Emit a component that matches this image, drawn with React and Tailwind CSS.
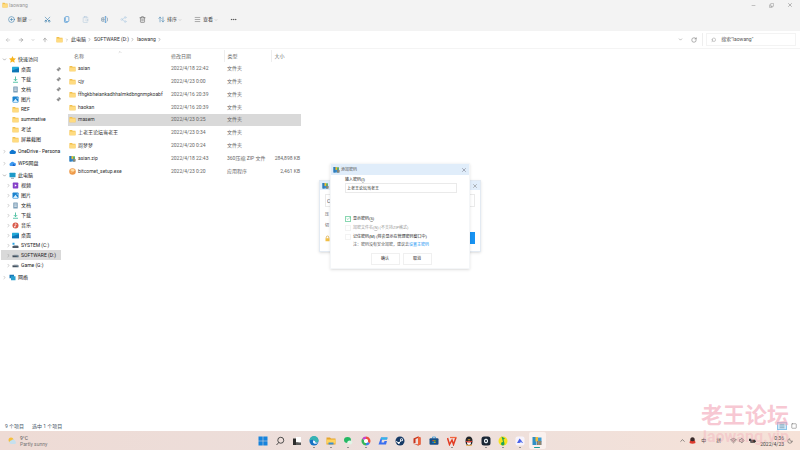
import { useState } from 'react';
import clsx from 'clsx';
import {
  ArrowLeft,
  ArrowRight,
  ArrowUp,
  ArrowUpDown,
  Check,
  ChevronDown,
  ChevronRight,
  ChevronUp,
  CirclePlus,
  ClipboardPaste,
  Copy,
  Ellipsis,
  Menu,
  Minus,
  Moon,
  Pin,
  RotateCw,
  Scissors,
  Search,
  Share2,
  Square,
  Trash2,
  Volume1,
  Wifi,
  X,
} from 'lucide-react';

function FolderIcon({ className = 'w-[7px] h-[7px]' }) {
  return (
    <svg viewBox="0 0 14 14" className={clsx('shrink-0', className)}>
      <path d="M1 2h5l1.500 1.600H13v9H1z" fill="#f2c04c" />
      <path d="M1 5h12v7.600H1z" fill="#ffdb80" />
    </svg>
  );
}

function ZipIcon({ className = 'w-[7px] h-[7px]' }) {
  return (
    <svg viewBox="0 0 14 14" className={clsx('shrink-0', className)}>
      <path d="M1 2h5l1 1h5v10H1z" fill="#3b8fd0" />
      <path d="M1 2h4v11H1z" fill="#2f7ab8" />
      <path d="M5 2h3v6H5z" fill="#f0c030" />
      <path d="M8 3h4v4H8z" fill="#6cb655" />
      <path d="M8 8h5v5H8z" fill="#56616b" />
      <path d="M9.500 8v5M11.500 8v5" stroke="#f4d48a" strokeWidth=".8" />
    </svg>
  );
}

function PagesIcon({ className }) {
  return (
    <svg viewBox="0 0 24 24" className={className} fill="none" stroke="currentColor" strokeWidth="2">
      <rect x="8" y="2" width="12" height="17" rx="2.500" />
      <path d="M5 5v14.500A2.500 2.500 0 007.500 22H16" />
    </svg>
  );
}

function RenameIcon({ className }) {
  return (
    <svg viewBox="0 0 24 24" className={className} fill="none" stroke="currentColor" strokeWidth="2">
      <path d="M12 6H4a2 2 0 00-2 2v8a2 2 0 002 2h8M19 6h1a2 2 0 012 2v8a2 2 0 01-2 2h-1" />
      <path d="M13 2h5M13 22h5M15.500 2v20" stroke="#2b84cf" />
      <path d="M6 10h5v4H6z" />
    </svg>
  );
}

const placeIcons = {
  star: <path d="M7 0l2.100 4.600 4.900.6-3.600 3.300 1 4.900L7 11l-4.400 2.400 1-4.900L0 5.200l4.900-.6z" fill="#f8b51c" />,
  desktop: (
    <>
      <rect x="0" y="1.500" width="14" height="11" rx="1" fill="#23a9d8" />
      <path d="M0 9l14-5v7.500a1 1 0 01-1 1H1a1 1 0 01-1-1z" fill="#0f75b5" />
    </>
  ),
  download: (
    <path d="M7 1v8M3.500 6L7 9.500 10.500 6M2 12.500h10" fill="none" stroke="#24b18c" strokeWidth="1.500" />
  ),
  document: (
    <>
      <rect x="2.500" y="1" width="9" height="12" rx="1" fill="#7e9fb8" />
      <path d="M4.500 4h5M4.500 6.500h5M4.500 9h5" stroke="#fff" strokeWidth="1.200" />
    </>
  ),
  picture: (
    <>
      <rect x="1" y="1" width="12" height="12" rx="1.500" fill="#1b83cf" />
      <path d="M2 12l5-6.500L12 12z" fill="#d9f0ff" />
      <circle cx="10.500" cy="4" r="1.200" fill="#fff" />
    </>
  ),
  video: (
    <>
      <rect x="1.500" y="1" width="11" height="12" rx="1.500" fill="#8640c8" />
      <path d="M5.500 4.500v5l4-2.500z" fill="#fff" />
    </>
  ),
  music: (
    <>
      <circle cx="7" cy="7" r="6" fill="#d95a4a" />
      <path d="M6.500 9.500V3.500l3 1.500" stroke="#fff" strokeWidth="1.200" fill="none" />
      <circle cx="5.500" cy="9.500" r="1.400" fill="#fff" />
    </>
  ),
  cloud: (
    <path d="M3.500 12A3 3 0 013 6.200 4 4 0 0110.300 5.500 3.200 3.200 0 0111 12z" fill="#1177cf" />
  ),
  wps: (
    <>
      <path d="M3.500 12A3 3 0 013 6.200 4 4 0 0110.300 5.500 3.200 3.200 0 0111 12z" fill="#3f9bf0" />
      <path d="M7 12l2-5 4 5z" fill="#1c62c9" />
    </>
  ),
  computer: (
    <>
      <rect x="1" y="1.500" width="12" height="9" rx="1" fill="#1d9ac9" />
      <path d="M4 12.500h6" stroke="#50708a" strokeWidth="1.300" />
    </>
  ),
  system: (
    <>
      <path d="M1 1.500h4v4H1z" fill="#28a3e4" />
      <path d="M1 8h12v4H1z" fill="#4e5a66" />
      <path d="M2 8l2-2h7l2 2z" fill="#a9b4bd" />
    </>
  ),
  drive: (
    <>
      <path d="M1 6.500h12v4H1z" fill="#46525e" />
      <path d="M2 6.500l2-1.500h7l2 1.500z" fill="#b4bdc5" />
      <path d="M9.500 8.500h2" stroke="#6fd0ff" />
    </>
  ),
  network: (
    <>
      <rect x="1" y="1.500" width="9" height="7" fill="#1879b8" />
      <rect x="4" y="4.500" width="9" height="8" fill="#2ba0cf" />
    </>
  ),
};

function PlaceIcon({ name }) {
  if (name === 'folder') return <FolderIcon />;
  return (
    <svg viewBox="0 0 14 14" className="w-[7px] h-[7px] shrink-0">
      {placeIcons[name]}
    </svg>
  );
}

const sections = [
  {
    label: '快速访问',
    icon: 'star',
    open: true,
    items: [
      { label: '桌面', icon: 'desktop', pinned: true },
      { label: '下载', icon: 'download', pinned: true },
      { label: '文档', icon: 'document', pinned: true },
      { label: '图片', icon: 'picture', pinned: true },
      { label: 'REF', icon: 'folder' },
      { label: 'summative', icon: 'folder' },
      { label: '考试', icon: 'folder' },
      { label: '屏幕截图', icon: 'folder' },
    ],
  },
  { label: 'OneDrive - Persona', icon: 'cloud', items: [] },
  { label: 'WPS网盘', icon: 'wps', items: [] },
  {
    label: '此电脑',
    icon: 'computer',
    open: true,
    items: [
      { label: '视频', icon: 'video', expandable: true },
      { label: '图片', icon: 'picture', expandable: true },
      { label: '文档', icon: 'document', expandable: true },
      { label: '下载', icon: 'download', expandable: true },
      { label: '音乐', icon: 'music', expandable: true },
      { label: '桌面', icon: 'desktop', expandable: true },
      { label: 'SYSTEM (C:)', icon: 'system', expandable: true },
      { label: 'SOFTWARE (D:)', icon: 'drive', expandable: true, active: true },
      { label: 'Game (G:)', icon: 'drive', expandable: true },
    ],
  },
  { label: '网络', icon: 'network', items: [] },
];

const files = [
  { name: 'asian', date: '2022/4/18 22:42', type: '文件夹' },
  { name: 'cjy', date: '2022/4/23 0:00', type: '文件夹' },
  { name: 'ffhgkbheiankadhhalmkdbngnmpkoabf', date: '2022/4/16 20:39', type: '文件夹' },
  { name: 'haokan', date: '2022/4/16 20:39', type: '文件夹' },
  { name: 'masem', date: '2022/4/23 0:25', type: '文件夹' },
  { name: '上老王论坛当老王', date: '2022/4/23 0:34', type: '文件夹' },
  { name: '周梦梦', date: '2022/4/20 0:24', type: '文件夹' },
  { name: 'asian.zip', date: '2022/4/18 22:43', type: '360压缩 ZIP 文件', size: '284,898 KB', icon: 'zip' },
  { name: 'bitcomet_setup.exe', date: '2022/4/23 0:20', type: '应用程序', size: '2,461 KB', icon: 'comet' },
];

function FileIcon({ icon }) {
  if (icon === 'zip') return <ZipIcon />;
  if (icon === 'comet') {
    return (
      <svg viewBox="0 0 14 14" className="w-[7px] h-[7px] shrink-0">
        <circle cx="7" cy="7" r="6.500" fill="#ee9a4a" />
        <path d="M2 4c3-3 7-3 10 0L8 8z" fill="#ffe0a8" />
        <circle cx="5" cy="8" r="2" fill="#f8b66a" />
      </svg>
    );
  }
  return <FolderIcon />;
}

function TitleBar() {
  return (
    <div className="flex h-[10px] items-center bg-[#f3f3f3] pl-[2px] text-[#999]">
      <FolderIcon className="w-[6px] h-[6px]" />
      <span className="ml-px">laowang</span>
      <div className="ml-auto flex text-[#777]">
        <button aria-label="最小化" className="grid w-[18px] place-items-center">
          <Minus className="w-[5px] h-[5px]" />
        </button>
        <button aria-label="还原" className="grid w-[18px] place-items-center">
          <Copy className="w-[5px] h-[5px] -scale-y-100" />
        </button>
        <button aria-label="关闭" className="grid w-[20px] place-items-center">
          <X className="w-[6px] h-[6px]" />
        </button>
      </div>
    </div>
  );
}

function ToolButton({ icon: Icon, label, color = 'text-[#3c7fae]', title }) {
  return (
    <button aria-label={title} className="flex items-center gap-[2px] text-[#333]">
      <Icon className={clsx('w-[7px] h-[7px]', color)} />
      {label && (
        <span className="flex items-center gap-px">
          {label}
          <ChevronDown className="w-[4px] h-[4px] text-[#999]" />
        </span>
      )}
    </button>
  );
}

function ScissorsIcon({ className }) {
  return <Scissors className={clsx('-rotate-90', className)} />;
}

function Toolbar() {
  return (
    <div className="flex h-[21px] items-center gap-[12px] bg-[#f3f3f3] px-[8px] pb-[2px]">
      <ToolButton icon={CirclePlus} label="新建" />
      <ToolButton icon={ScissorsIcon} title="剪切" />
      <ToolButton icon={PagesIcon} title="复制" color="text-[#2b84cf]" />
      <ToolButton icon={ClipboardPaste} title="粘贴" color="text-[#b5cbdc]" />
      <ToolButton icon={RenameIcon} title="重命名" color="text-[#5d7f99]" />
      <ToolButton icon={Share2} title="共享" color="text-[#b5cfe6]" />
      <ToolButton icon={Trash2} title="删除" color="text-[#666]" />
      <ToolButton icon={ArrowUpDown} label="排序" />
      <ToolButton icon={Menu} label="查看" color="text-[#777]" />
      <ToolButton icon={Ellipsis} title="更多" color="text-[#333]" />
    </div>
  );
}

function AddressBar() {
  const crumbs = ['此电脑', 'SOFTWARE (D:)', 'laowang'];

  return (
    <div className="flex h-[18px] items-center border-b border-[#f4f4f4] pr-[4px]">
      <div className="flex w-[56px] items-center gap-[7px] pl-[5px] text-[#777]">
        <button aria-label="后退"><ArrowLeft className="w-[6px] h-[6px] text-[#aaa]" /></button>
        <button aria-label="前进"><ArrowRight className="w-[6px] h-[6px]" /></button>
        <button aria-label="最近"><ChevronDown className="w-[4px] h-[4px]" /></button>
        <button aria-label="向上"><ArrowUp className="w-[6px] h-[6px]" /></button>
      </div>
      <nav className="flex flex-1 items-center gap-[2px] text-[#333]">
        <FolderIcon />
        <ChevronRight className="w-[4px] h-[4px] text-[#666]" />
        {crumbs.map((crumb) => (
          <span key={crumb} className="flex items-center gap-px">
            <a href="#path">{crumb}</a>
            <ChevronRight className="w-[5px] h-[5px] text-[#666]" />
          </span>
        ))}
      </nav>
      <div className="flex h-[13px] items-center gap-[8px] border-r border-[#eee] pr-[5px] text-[#666]">
        <button aria-label="展开地址"><ChevronDown className="w-[5px] h-[5px]" /></button>
        <button aria-label="刷新"><RotateCw className="w-[6px] h-[6px]" /></button>
      </div>
      <label className="ml-[3px] flex h-[13px] w-[90px] items-center gap-[5px] border border-[#f3f3f3] px-[4px]">
        <Search className="w-[6px] h-[6px] -scale-x-100 text-[#888]" />
        <input aria-label="搜索" placeholder={'搜索"laowang"'} className="w-full min-w-0 outline-none placeholder:text-[#555]" />
      </label>
    </div>
  );
}

function Sidebar() {
  return (
    <aside className="flex w-[62px] shrink-0 flex-col gap-[2px] overflow-hidden pt-[4px] pl-px whitespace-nowrap text-[#222]">
      {sections.map((section) => (
        <div key={section.label}>
          <button className="flex h-[10px] w-full items-center gap-[2px] pl-px">
            {section.open ? (
              <ChevronDown className="w-[5px] h-[5px] shrink-0 text-[#555]" />
            ) : (
              <ChevronRight className="w-[5px] h-[5px] shrink-0 text-[#888]" />
            )}
            <PlaceIcon name={section.icon} />
            <span>{section.label}</span>
          </button>
          {section.items.map((item) => (
            <button
              key={item.label}
              className={clsx(
                'flex h-[10px] w-[60px] items-center gap-[1px] pl-[5px]',
                item.active && 'bg-[#d9d9d9]'
              )}
            >
              <span className="w-[5px]">
                {item.expandable && <ChevronRight className="w-[5px] h-[5px] text-[#888]" />}
              </span>
              <PlaceIcon name={item.icon} />
              <span className="ml-px">{item.label}</span>
              {item.pinned && <Pin className="ml-auto w-[5px] h-[5px] rotate-45 fill-current text-[#888]" />}
            </button>
          ))}
        </div>
      ))}
    </aside>
  );
}

function FileTable() {
  const [selected, setSelected] = useState('masem');

  return (
    <table className="ml-[6px] h-[128px] w-[233px] table-fixed self-start text-[#666]">
      <colgroup>
        <col className="w-[99px]" />
        <col className="w-[57px]" />
        <col className="w-[47px]" />
        <col className="w-[30px]" />
      </colgroup>
      <thead>
        <tr className="h-[12px] text-left">
          <th className="relative pl-[6px] font-normal">
            名称
            <ChevronUp className="absolute top-0 left-[50px] w-[4px] h-[4px] text-[#888]" />
          </th>
          <th className="pl-[4px] font-normal">修改日期</th>
          <th className="border-l border-[#eee] pl-[3px] font-normal">类型</th>
          <th className="border-l border-[#eee] pl-[3px] font-normal">大小</th>
        </tr>
      </thead>
      <tbody>
        {files.map((file) => (
          <tr
            key={file.name}
            onClick={() => setSelected(file.name)}
            className={clsx('h-[12px] whitespace-nowrap', selected === file.name && 'bg-[#d9d9d9]')}
          >
            <td className="text-[#333]">
              <span className="flex items-center gap-[2px] pl-px">
                <FileIcon icon={file.icon} />
                {file.name}
              </span>
            </td>
            <td className="pl-[4px]">{file.date}</td>
            <td className="pl-[3px]">{file.type}</td>
            <td>
              <span className="flex justify-end pr-px">{file.size}</span>
            </td>
          </tr>
        ))}
      </tbody>
    </table>
  );
}

function CheckRow({ label, checked = false, disabled = false, onChange }) {
  return (
    <label className={clsx('flex h-[9px] items-center gap-[2px]', disabled ? 'text-[#999]' : 'text-[#222]')}>
      <span className="relative grid h-[6px] w-[6px] place-items-center">
        <input
          type="checkbox"
          checked={checked}
          disabled={disabled}
          onChange={onChange}
          className={clsx(
            'h-[6px] w-[6px] appearance-none border',
            checked ? 'border-[#8ad8b2]' : 'border-[#f3f3f3]'
          )}
        />
        {checked && <Check className="pointer-events-none absolute w-[5px] h-[5px] text-[#2fa86e]" />}
      </span>
      <span>{label}</span>
    </label>
  );
}

// Compress window that sits under the password prompt
function ArchiveDialog() {
  return (
    <section className="absolute top-[180px] left-1/2 flex h-[72px] w-[162px] -translate-x-1/2 flex-col border border-[#e3eaf2] bg-white text-[4px] leading-[6px] shadow-sm">
      <header className="flex h-[9px] items-center justify-between bg-[#e2eefb] px-[2px]">
        <ZipIcon />
        <button aria-label="关闭压缩窗口"><X className="w-[6px] h-[6px] text-[#777]" /></button>
      </header>
      <div className="flex flex-1 flex-col px-[5px] pt-[4px] text-[#555]">
        <input aria-label="压缩文件名" defaultValue="C" className="h-[13px] w-full border border-[#eaeaea] px-px text-[5px]" />
        <span className="mt-[5px]">压</span>
        <span className="mt-[5px]">切</span>
        <div className="mt-[3px] flex items-center justify-between">
          <svg viewBox="0 0 10 12" className="w-[5px] h-[7px]">
            <path d="M2.500 6V3.500a2.500 2.500 0 015 0V6" fill="none" stroke="#d8a63a" strokeWidth="1.400" />
            <rect x="1" y="5.500" width="8" height="6" fill="#f2bf45" />
          </svg>
          <button aria-label="立即压缩" className="h-[12px] w-[36px] bg-[#1893f2]" />
        </div>
      </div>
    </section>
  );
}

function PasswordDialog() {
  const [showPassword, setShowPassword] = useState(true);
  const [remember, setRemember] = useState(false);

  return (
    <section className="absolute top-[163px] left-1/2 flex h-[106px] w-[140px] -translate-x-1/2 flex-col border border-[#f4f6f8] bg-white text-[4px] leading-[6px] text-[#222] shadow-sm">
      <header className="flex h-[11px] shrink-0 items-center gap-px bg-[#e0edfa] px-[2px] text-[#555]">
        <ZipIcon />
        <span>添加密码</span>
        <button aria-label="关闭" className="ml-auto"><X className="w-[6px] h-[6px] text-[#667]" /></button>
      </header>
      <div className="flex flex-1 flex-col pt-[2px] pr-[12px] pl-[14px]">
        <label htmlFor="password">输入密码(<u className="decoration-[#aaa]">I</u>)</label>
        <input
          id="password"
          type={showPassword ? 'text' : 'password'}
          defaultValue="上老王论坛当老王"
          className="h-[10px] border border-[#eaeaea] px-px pb-px"
        />
        <div className="mt-[21px] flex flex-col">
          <CheckRow
            label={<>显示密码(<u className="decoration-[#aaa]">S</u>)</>}
            checked={showPassword}
            onChange={() => setShowPassword((v) => !v)}
          />
          <CheckRow label={<>加密文件名(<u className="decoration-[#ccc]">N</u>) (不支持ZIP格式)</>} disabled />
          <CheckRow
            label="记住密码(M) (将会显示在管理密码窗口中)"
            checked={remember}
            onChange={() => setRemember((v) => !v)}
          />
        </div>
        <p className="h-[9px] pt-px pl-[8px] text-[#555]">
          注：密码没有安全加密，建议去
          <a href="#master" className="text-[#2196f3]">设置主密码</a>
        </p>
        <div className="flex justify-center gap-[3px] pt-[3px]">
          <button className="h-[12px] w-[29px] border border-[#f0f0f0]">确认</button>
          <button className="h-[12px] w-[29px] border border-[#f0f0f0]">取消</button>
        </div>
      </div>
    </section>
  );
}

function StatusBar() {
  return (
    <footer className="flex h-[10px] items-center gap-[8px] pr-[3px] pl-[5px] text-[#456]">
      <span>9 个项目</span>
      <span>选中 1 个项目</span>
      <div className="ml-auto flex items-center gap-[4px]">
        <button aria-label="详细信息" className="border border-[#8cc4e8] bg-[#cfe8f8] px-px">
          <Menu className="w-[6px] h-[6px] text-[#4a7187]" />
        </button>
        <button aria-label="大图标"><Square className="w-[6px] h-[6px] text-[#666]" /></button>
      </div>
    </footer>
  );
}

const apps = [
  {
    name: '开始',
    art: <path d="M1 1h8.500v8.500H1zM10.500 1H19v8.500h-8.500zM1 10.500h8.500V19H1zM10.500 10.500H19V19h-8.500z" fill="#1683dc" />,
  },
  {
    name: '搜索',
    art: (
      <g fill="none" stroke="#3c3c3c" strokeWidth="1.800">
        <circle cx="11.500" cy="8.500" r="6" />
        <path d="M7.500 13L3 18" />
      </g>
    ),
  },
  {
    name: '任务视图',
    art: (
      <>
        <path d="M2 5h11v13H2z" fill="#2c2c2c" />
        <path d="M8 2h10v11H8z" fill="#fff" />
        <path d="M8 13h10v5H8z" fill="#5a5a5a" />
      </>
    ),
  },
  {
    name: 'Edge',
    running: true,
    art: (
      <>
        <circle cx="10" cy="10" r="9" fill="#1472c4" />
        <path d="M1 9a9 9 0 0118 0c0 4-5 5-7 3 1-4-5-6-11-3z" fill="#36b3b4" />
        <path d="M8 9c4-1 5 2 4 3 2 2 5 2 6 0-1 4-8 5-10 1z" fill="#eaf6ff" />
      </>
    ),
  },
  {
    name: '文件资源管理器',
    running: true,
    art: (
      <>
        <path d="M1 3h7l2 2h9v12H1z" fill="#e5a32d" />
        <path d="M1 7h18v8H1z" fill="#ffd35c" />
        <path d="M5 13h10v4H5z" fill="#3c8fd0" />
      </>
    ),
  },
  {
    name: '微信',
    running: true,
    art: (
      <>
        <ellipse cx="9" cy="8" rx="7" ry="6" fill="#25b864" />
        <ellipse cx="13.500" cy="13" rx="5" ry="4" fill="#e2f5e8" />
      </>
    ),
  },
  {
    name: '360浏览器',
    running: true,
    art: (
      <>
        <g fill="none" strokeWidth="5">
          <path d="M10 3.500a6.500 6.500 0 015.600 9.700" stroke="#f0503c" />
          <path d="M15.600 13.200A6.500 6.500 0 0110 16.500" stroke="#3f7fe8" />
          <path d="M10 16.500A6.500 6.500 0 014.400 6.800" stroke="#35b75a" />
          <path d="M4.400 6.800A6.500 6.500 0 0110 3.500" stroke="#c943c9" />
        </g>
        <circle cx="10" cy="10" r="4" fill="#fff" />
      </>
    ),
  },
  {
    name: '加速器',
    art: (
      <>
        <path d="M6 3h13l-1 4H8l-1 6h5l1-3h5l-2 7H1z" fill="#3a6ff0" />
        <path d="M6 3h13l-1 4H6z" fill="#31b7e8" />
      </>
    ),
  },
  {
    name: 'Steam',
    art: (
      <>
        <circle cx="10" cy="10" r="9" fill="#173a66" />
        <path d="M2 11l6 3 5-6" stroke="#fff" strokeWidth="2" fill="none" />
        <circle cx="13" cy="7.500" r="3" fill="#fff" />
        <circle cx="13" cy="7.500" r="1.400" fill="#173a66" />
        <circle cx="7.500" cy="14" r="2" fill="#fff" />
      </>
    ),
  },
  {
    name: 'Office',
    art: (
      <>
        <path d="M12 1l5 2v14l-5 2-8-3 8 1V4L7 6v8l-4 1V5z" fill="#c8331c" />
        <path d="M12 1l5 2v14l-5 2z" fill="#f0633a" />
      </>
    ),
  },
  {
    name: '应用商店',
    art: (
      <>
        <path d="M7 5V2h6v3" fill="none" stroke="#2a95dc" strokeWidth="1.500" />
        <rect x="1" y="4.500" width="18" height="13" rx="2" fill="#174f86" />
        <path d="M7 8h2.500v2.500H7z" fill="#f25022" />
        <path d="M10.500 8H13v2.500h-2.500z" fill="#7fba00" />
        <path d="M7 11.500h2.500V14H7z" fill="#00a4ef" />
        <path d="M10.500 11.500H13V14h-2.500z" fill="#ffb900" />
      </>
    ),
  },
  {
    name: 'WPS',
    running: true,
    art: (
      <>
        <path d="M1 4l4 13 5-9 3 9 5-14" fill="none" stroke="#e23b22" strokeWidth="3" />
        <path d="M6 3h13" stroke="#f2653f" strokeWidth="2.500" />
      </>
    ),
  },
  {
    name: 'QQ',
    art: (
      <>
        <ellipse cx="10" cy="10" rx="7" ry="9" fill="#20242a" />
        <ellipse cx="10" cy="14" rx="4" ry="4" fill="#fff" />
        <path d="M4 10.500c4 2 8 2 12 0" stroke="#e0392d" strokeWidth="2.500" fill="none" />
        <ellipse cx="10" cy="7.500" rx="3" ry="1.200" fill="#f4a52a" />
        <path d="M4 18.500h12" stroke="#f4a52a" strokeWidth="1.500" />
      </>
    ),
  },
  {
    name: '剪辑',
    running: true,
    art: (
      <>
        <rect x="1" y="1" width="18" height="18" rx="5" fill="#1b2736" />
        <path d="M10 5l4 2.500v5L10 15l-4-2.500v-5z" fill="#e9f1f7" />
        <circle cx="10" cy="10" r="2" fill="#1b2736" />
      </>
    ),
  },
  {
    name: 'QQ音乐',
    running: true,
    art: (
      <>
        <circle cx="10" cy="10" r="9" fill="#f5e21e" />
        <path d="M7 1l7 4-3 2 2 8a3.500 3.500 0 11-3-3z" fill="#1fa35b" />
      </>
    ),
  },
  {
    name: '网盘',
    running: true,
    art: (
      <>
        <rect x="1" y="1" width="18" height="18" rx="4" fill="#f7f3fb" />
        <path d="M4 14l5-9 3 3 4 6z" fill="#4a62e8" />
        <path d="M9 14l3-3 3 3z" fill="#b6c7ff" />
      </>
    ),
  },
  {
    name: '360压缩',
    active: true,
    art: (
      <>
        <path d="M1 2h8v16H1z" fill="#2f8fc5" />
        <path d="M7 2h5v9H7z" fill="#f0bd3a" />
        <path d="M12 3h7v8h-7z" fill="#3c9ed6" />
        <path d="M10 10h9v8h-9z" fill="#69757d" />
        <path d="M12.500 10v8M16 10v8" stroke="#e8b75a" strokeWidth="1.200" />
      </>
    ),
  },
];

function Taskbar() {
  return (
    <div className="grid h-[19px] grid-cols-[1fr_292px_1fr] items-center bg-linear-to-r from-[#eedbd5] via-[#ecdfdc] to-[#f6e2d8] text-[#555]">
      <button className="flex items-center gap-[3px] pl-[8px] text-left leading-[6px]">
        <svg viewBox="0 0 18 16" className="w-[9px] h-[8px]">
          <circle cx="6" cy="6" r="5" fill="#f6bf3c" />
          <path d="M6 14a3.500 3.500 0 01.5-7 4.500 4.500 0 018 1.500A3 3 0 0114 14z" fill="#c6e0ee" />
        </svg>
        <span className="flex flex-col">
          <span>9°C</span>
          <span className="text-[#777]">Partly sunny</span>
        </span>
      </button>
      <div className="grid grid-cols-[repeat(17,1fr)]">
        {apps.map((app) => (
          <button
            key={app.name}
            aria-label={app.name}
            className={clsx('flex h-[17px] flex-col items-center justify-end gap-px rounded-xs', app.active && 'bg-[#faf1ee]')}
          >
            <svg viewBox="0 0 20 20" className="w-[10px] h-[10px]">
              {app.art}
            </svg>
            <span
              className={clsx(
                'mb-px h-px rounded-full',
                app.active ? 'w-[6px] bg-[#1c9c9a]' : 'w-[2px]',
                app.running && 'bg-[#888]'
              )}
            />
          </button>
        ))}
      </div>
      <div className="flex items-center justify-end pr-[7px] text-[#444]">
        <ChevronUp className="mr-[3px] w-[7px] h-[7px]" />
        <svg viewBox="0 0 14 14" className="mr-[5px] w-[7px] h-[7px]">
          <ellipse cx="7" cy="6" rx="4.500" ry="5.500" fill="#3a2a2a" />
          <path d="M2 7c3 2 7 2 10 0l1 5c-4 2-8 2-12 0z" fill="#dd3b2e" />
        </svg>
        <span className="mr-[10px]">中</span>
        <span className="mr-[9px]">拼</span>
        <Wifi className="mr-[2px] w-[7px] h-[7px]" />
        <Volume1 className="mr-[3px] w-[7px] h-[7px]" />
        <svg viewBox="0 0 16 12" className="mr-[4px] w-[7px] h-[6px]">
          <path d="M3 3h11v7H3z" fill="#333" />
          <path d="M14 5h2v3h-2zM0 1h5v5H0z" fill="#333" />
        </svg>
        <div className="mr-[3px] flex flex-col text-right leading-[6px]">
          <span>0:36</span>
          <span>2022/4/23</span>
        </div>
        <Moon className="w-[6px] h-[6px]" />
      </div>
    </div>
  );
}

export default function App() {
  return (
    <div className="relative flex h-screen flex-col overflow-hidden bg-white font-[Roboto,'Noto_Sans_CJK_SC',sans-serif] text-[5px] leading-[7px]">
      <TitleBar />
      <Toolbar />
      <AddressBar />
      <main className="flex min-h-0 flex-1 pt-px">
        <Sidebar />
        <FileTable />
      </main>
      <StatusBar />
      <Taskbar />

      <ArchiveDialog />
      <PasswordDialog />

      {/* Site watermark */}
      <div className="pointer-events-none absolute right-[11px] bottom-[5px] text-right font-bold text-[#f3a3b5]/60">
        <p className="text-[22px] leading-[26px]">老王论坛</p>
        <p className="text-[16px] leading-[16px] text-[#f3a3b5]/35">laowang.vip</p>
      </div>
    </div>
  );
}
